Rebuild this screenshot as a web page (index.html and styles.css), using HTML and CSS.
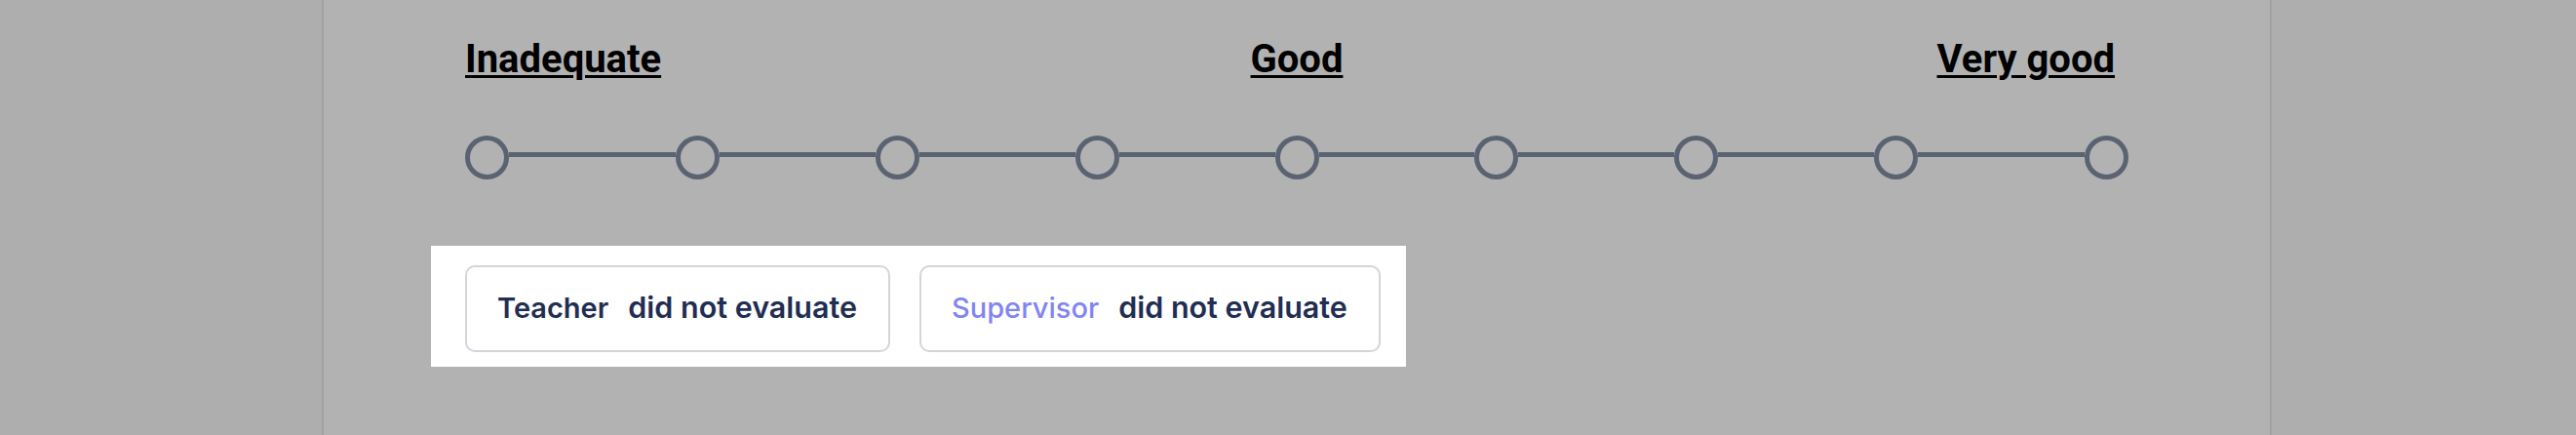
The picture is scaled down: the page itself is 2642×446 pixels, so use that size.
FILE: index.html
```html
<!DOCTYPE html>
<html lang="en">
<head>
<meta charset="utf-8">
<title>Evaluation scale</title>
<link rel="stylesheet" href="styles.css">
</head>
<body>
  <main class="card">
    <div class="labels">
      <span class="label label-start">Inadequate</span>
      <span class="label label-mid">Good</span>
      <span class="label label-end">Very good</span>
    </div>
    <div class="scale">
      <span class="dot"></span>
      <span class="seg seg-end"></span>
      <span class="dot"></span>
      <span class="seg"></span>
      <span class="dot"></span>
      <span class="seg"></span>
      <span class="dot"></span>
      <span class="seg"></span>
      <span class="dot"></span>
      <span class="seg"></span>
      <span class="dot"></span>
      <span class="seg"></span>
      <span class="dot"></span>
      <span class="seg"></span>
      <span class="dot"></span>
      <span class="seg seg-end"></span>
      <span class="dot"></span>
    </div>
    <div class="spotlight">
      <div class="status">
        <span class="who">Teacher</span>
        <span class="what">did not evaluate</span>
      </div>
      <div class="status">
        <span class="who who-accent">Supervisor</span>
        <span class="what">did not evaluate</span>
      </div>
    </div>
  </main>
</body>
</html>
```

FILE: styles.css
```css
html, body {
  margin: 0;
  padding: 0;
}

body {
  background: #f9fafb;
  font-family: Inter, "Noto Sans", sans-serif;
  overflow: hidden;
}

.card {
  box-sizing: border-box;
  width: 2000px;
  min-height: 600px;
  margin-left: 330px;
  background: #ffffff;
  border: 2px solid #e6e7ea;
  border-top: 0;
  padding: 37px 145px 120px 145px;
}

.labels {
  display: grid;
  grid-template-columns: 1fr auto 1fr;
  align-items: start;
}

.label {
  font-family: Roboto, "Liberation Sans", sans-serif;
  font-weight: 700;
  font-size: 40px;
  line-height: 47px;
  color: #000;
  text-decoration: underline;
  text-decoration-thickness: 3px;
  text-underline-offset: 3px;
}

.label-start {
  justify-self: start;
}

.label-mid {
  justify-self: center;
}

.label-end {
  justify-self: end;
  padding-right: 14px;
}

.scale {
  display: flex;
  align-items: center;
  margin-top: 55px;
  height: 45px;
}

.dot {
  box-sizing: border-box;
  flex: 0 0 45px;
  width: 45px;
  height: 45px;
  border: 5px solid #838ea5;
  border-radius: 50%;
  background: transparent;
}

.seg {
  flex: 160 1 0;
  height: 5px;
  margin-bottom: 7px;
  background: #838ea5;
}

.seg-end {
  flex-grow: 171;
}

.spotlight {
  position: relative;
  z-index: 10;
  display: flex;
  gap: 30px;
  width: fit-content;
  margin-top: 68px;
  margin-left: -35px;
  padding: 20px 26px 15px 35px;
  background: #ffffff;
  box-shadow: 0 0 0 5000px rgba(0, 0, 0, 0.3);
}

.status {
  display: flex;
  align-items: baseline;
  gap: 20px;
  border: 2px solid #d3d5da;
  border-radius: 10px;
  padding: 23px 32px 26px 31px;
  line-height: 35px;
  font-weight: 600;
  color: #1f2e52;
  white-space: nowrap;
}

.who {
  font-size: 29px;
}

.what {
  font-size: 30.5px;
}

.who-accent {
  color: #8185f2;
  font-weight: 500;
}
```
